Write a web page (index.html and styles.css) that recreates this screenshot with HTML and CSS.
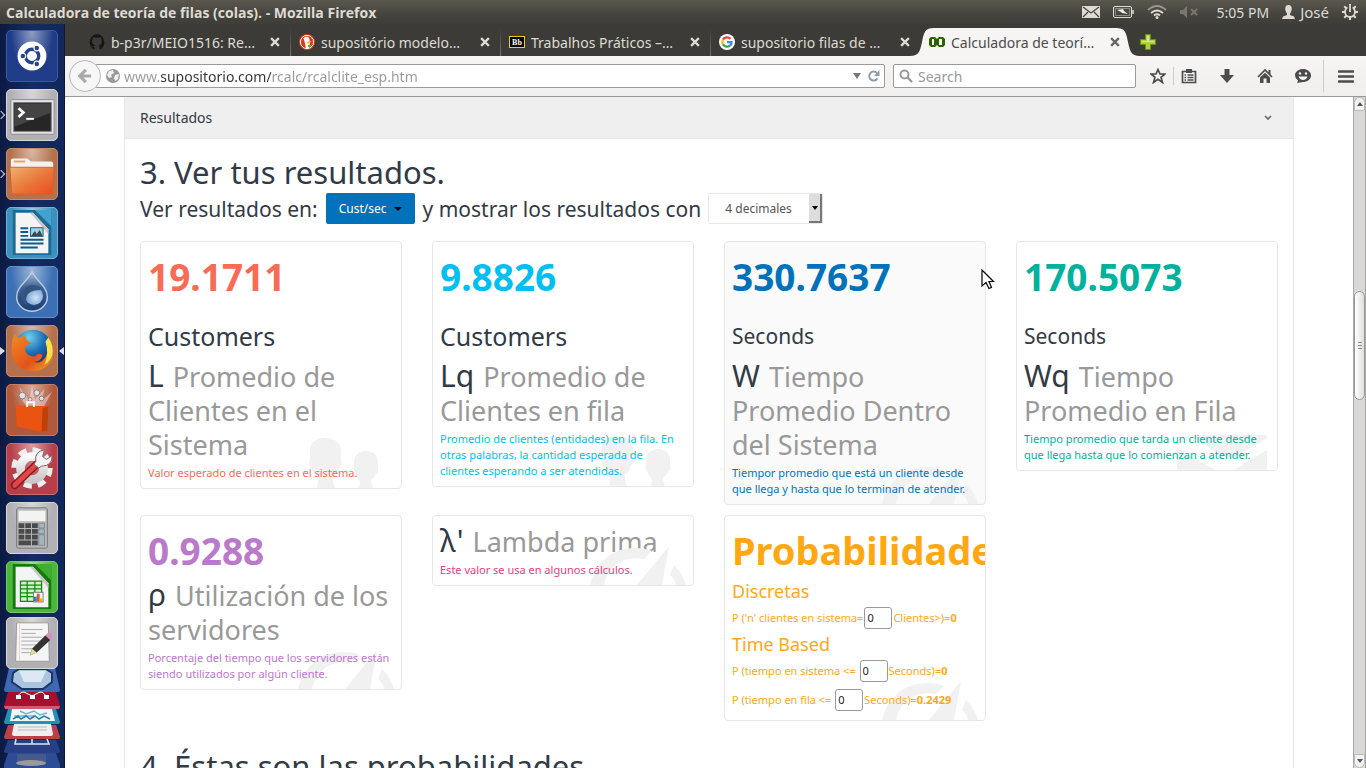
FILE: index.html
```html
<!DOCTYPE html>
<html lang="es">
<head>
<meta charset="utf-8">
<title>Calculadora de teoría de filas (colas).</title>
<link rel="stylesheet" href="styles.css">
</head>
<body>
<svg class="defs" aria-hidden="true">
  <defs>
    <linearGradient id="folder" x1="0" y1="0" x2="1" y2="1"><stop offset="0" stop-color="#f0b070"/><stop offset=".5" stop-color="#e97a3c"/><stop offset="1" stop-color="#ee4a1c"/></linearGradient>
    <linearGradient id="drop" x1="0" y1="0" x2="0" y2="1"><stop offset="0" stop-color="#a9bdd6"/><stop offset=".4" stop-color="#3f6396"/><stop offset="1" stop-color="#1d3c70"/></linearGradient>
    <radialGradient id="dropIn" cx=".6" cy=".6" r=".5"><stop offset="0" stop-color="#cfe3f5"/><stop offset="1" stop-color="#7fa9d8"/></radialGradient>
    <radialGradient id="globe" cx=".4" cy=".2" r=".9"><stop offset="0" stop-color="#6fd0ee"/><stop offset=".45" stop-color="#1b6db4"/><stop offset="1" stop-color="#0a2258"/></radialGradient>
    <linearGradient id="fox" x1="0" y1="0" x2="1" y2="1"><stop offset="0" stop-color="#f28a22"/><stop offset=".6" stop-color="#e4531a"/><stop offset="1" stop-color="#f9a51c"/></linearGradient>
    <linearGradient id="steel" x1="0" y1="0" x2="0" y2="1"><stop offset="0" stop-color="#fafafa"/><stop offset="1" stop-color="#c9c9c9"/></linearGradient>
    <symbol id="people" viewBox="0 0 70 50">
      <path d="M16 0C27 0 33 6 32 16V22C34 27 30 29 29 32C28 37 24 36 24 40V44L26 50H8L9 44V40C9 36 4 38 3 31C1 28 -1 27 1 22V14C0 6 6 0 16 0Z"/>
      <path d="M57 13C65 13 69 18 69 25V30C70 34 68 35 66 37C65 41 62 40 62 44L64 50H50L51 45C51 41 48 41 47 37C45 35 44 33 45 29V24C45 18 49 13 57 13Z"/>
    </symbol>
    <symbol id="gauge" viewBox="0 0 96 39">
      <path d="M79 0L72 39H47Z"/>
      <path d="M0 39C6 15 25 1 46 2Q55 2 62 5L54 13C34 9 18 20 14 39Z"/>
      <path d="M84 19Q93 28 96 39H86Q85 33 80 29Z"/>
    </symbol>
    <symbol id="mail" viewBox="0 0 90 35">
      <path d="M17 0H90V3L53 25L17 3ZM0 13L38 35H0ZM90 15V35H57Z"/>
    </symbol>
    <symbol id="close" viewBox="0 0 10 10"><path d="M2 2L8 8M8 2L2 8" stroke="currentColor" stroke-width="2.4" fill="none" stroke-linecap="square"/></symbol>
  </defs>
</svg>

<div class="desktop">
  <header class="topbar">
    <span class="window-title">Calculadora de teoría de filas (colas). - Mozilla Firefox</span>
    <div class="indicators">
      <svg width="18" height="12" viewBox="0 0 18 12"><rect width="18" height="12" fill="#dfdbd2"/><path d="M1 1L9 7L17 1M1 11L6 6M17 11L12 6" stroke="#4a4843" stroke-width="1.3" fill="none"/></svg>
      <svg width="21" height="12" viewBox="0 0 21 12"><rect x=".5" y=".5" width="18" height="11" rx="1.5" fill="none" stroke="#dfdbd2"/><rect x="2.5" y="2.5" width="14" height="7" fill="none" stroke="#8a8880"/><path d="M20 4V8" stroke="#dfdbd2" stroke-width="1.5"/><path d="M4 4L10 3L11 5L15 8L9 7L8 6Z" fill="#efece6"/></svg>
      <svg width="20" height="14" viewBox="0 0 20 14"><path d="M1 5Q10 -3 19 5" stroke="#98958d" stroke-width="1.7" fill="none"/><path d="M4 8Q10 3 16 8M7 10.500Q10 8 13 10.500" stroke="#dfdbd2" stroke-width="1.8" fill="none"/><circle cx="10" cy="12.500" r="1.500" fill="#dfdbd2"/></svg>
      <svg width="18" height="12" viewBox="0 0 18 12"><path d="M0 4H3L7 0V12L3 8H0Z" fill="#7a776f"/><path d="M11 3L17 9M17 3L11 9" stroke="#7a776f" stroke-width="2"/></svg>
      <span class="clock">5:05 PM</span>
      <span class="user"><svg width="13" height="14" viewBox="0 0 13 14"><path d="M6.500 0C9 0 10 2 9.700 4.500Q9.400 7 8 8.500V10L12 11.500L13 14H0L1 11.500L5 10V8.500Q3.600 7 3.300 4.500C3 2 4 0 6.500 0Z" fill="#dfdbd2"/></svg>José</span>
      <svg width="16" height="16" viewBox="0 0 16 16"><circle cx="8" cy="8" r="5" fill="none" stroke="#dfdbd2" stroke-width="1.800"/><path d="M8 0V3M8 13V16M0 8H3M13 8H16M2.300 2.300L4.500 4.500M11.500 11.500L13.700 13.700M2.300 13.700L4.500 11.500M11.500 4.500L13.700 2.300" stroke="#dfdbd2" stroke-width="2"/><path d="M8 1V8" stroke="#45433e" stroke-width="5"/><path d="M8 1V8" stroke="#dfdbd2" stroke-width="1.800"/></svg>
    </div>
  </header>

  <div class="workspace">
    <nav class="launcher" aria-label="Lanzador">
      <a class="tile tile-dash" href="#" aria-label="Dash"><svg viewBox="0 0 52 52"><circle cx="26" cy="26" r="15" fill="#fff"/><circle cx="26" cy="26" r="7" fill="none" stroke="#24458e" stroke-width="3.500"/><g fill="#24458e" stroke="#fff" stroke-width="1.200"><circle cx="16.500" cy="26" r="2.900"/><circle cx="31" cy="17.700" r="2.900"/><circle cx="31" cy="34.300" r="2.900"/></g></svg></a>
      <a class="tile tile-grey running" href="#" aria-label="Terminal"><svg viewBox="0 0 52 52"><rect x="4" y="10" width="45" height="36" rx="1" fill="#e4e4e4" stroke="#8a8a90"/><rect x="7" y="13" width="39" height="30" fill="#262626" stroke="#777"/><path d="M8 14H45V24L8 38Z" fill="#444"/><path d="M12 19L17 23.500L12 28" stroke="#fff" stroke-width="2.800" fill="none"/><path d="M20 30H28" stroke="#fff" stroke-width="2"/></svg></a>
      <a class="tile tile-brown running" href="#" aria-label="Archivos"><svg viewBox="0 0 52 52"><path d="M4 12Q4 10 6 10H21L25 13H46Q48 13 48 15V24H4Z" fill="#f3f1ef"/><rect x="7" y="12" width="12" height="2" fill="#f2a06b"/><path d="M3 19H49L47 47H5Z" fill="url(#folder)" stroke="#d9602c"/></svg></a>
      <a class="tile tile-cyan" href="#" aria-label="Writer"><svg viewBox="0 0 52 52"><path d="M6 2H46V49H6Z" fill="#1b6a94"/><path d="M29 2H46V19Z" fill="#3fa2cf"/><path d="M9 5H27L43 22V47H9Z" fill="#f4f4f4"/><path d="M27 5L43 22V27L24 5Z" fill="#c8c8c8"/><path d="M14 21H22M14 25H22M14 29H22M14 33H38M14 37H38M14 41H32" stroke="#0b5c8c" stroke-width="2"/><rect x="24.500" y="20.500" width="13" height="9" fill="#9fd2ee" stroke="#0b5c8c"/><path d="M25 29L29 24L31 27L34 23L37 29Z" fill="#444"/></svg></a>
      <a class="tile tile-blue" href="#" aria-label="Deluge"><svg viewBox="0 0 52 52"><path d="M26 5C30 14 42 20 42 31A16 15 0 0 1 10 31C10 20 22 14 26 5Z" fill="url(#drop)" stroke="#b9cce2" stroke-width="1.500"/><circle cx="28" cy="30" r="9.500" fill="url(#dropIn)"/><path d="M35 21Q20 14 15 29Q15 37 21 40Q16 24 35 24Z" fill="#35547e"/></svg></a>
      <a class="tile tile-brown running focused" href="#" aria-label="Firefox"><svg viewBox="0 0 52 52"><circle cx="27" cy="24" r="20" fill="url(#globe)"/><path d="M8 8Q10 12 13 12L19 10L20 15L26 18L20 20Q17 26 22 30Q28 34 32 29Q36 28 37 31Q34 38 27 37Q40 42 44 20L48 22Q50 35 40 43Q28 51 14 43Q3 35 5 20Q5 14 8 8Z" fill="url(#fox)"/><path d="M43 12Q49 20 47 31Q44 38 39 40Q44 28 40 16Z" fill="#fde04a"/></svg></a>
      <a class="tile tile-rust" href="#" aria-label="Software"><svg viewBox="0 0 52 52"><path d="M26 28L6 5L17 17L13 2L23 15L26 1L29 15L39 4L36 16L47 7L38 23Z" fill="#fff" opacity=".4"/><g fill="#dfe4ea" stroke="#8a7770"><circle cx="16" cy="11" r="3.500"/><circle cx="31" cy="8" r="3"/><circle cx="36" cy="14" r="2.500"/><circle cx="24" cy="15" r="2"/></g><path d="M9 21L43 22L42 47L36 49L10 43Z" fill="#ea5310"/><path d="M36 49L37 24L43 22L42 47Z" fill="#bf400b"/><path d="M21 23V18H28V23" stroke="#fff" stroke-width="2" fill="none"/></svg></a>
      <a class="tile tile-red" href="#" aria-label="Configuración"><svg viewBox="0 0 52 52"><circle cx="26" cy="25" r="18" fill="none" stroke="#eee" stroke-width="7" stroke-dasharray="8.100 6.040"/><circle cx="26" cy="25" r="12" fill="none" stroke="url(#steel)" stroke-width="9"/><path d="M8 43L33 19" stroke="#8f1717" stroke-width="8" stroke-linecap="round"/><path d="M8 43L32 20" stroke="#e04848" stroke-width="5" stroke-linecap="round"/><path d="M30 18Q28 8 39 6L37 13L41 16L47 12Q47 23 36 23L33 25L28 21Z" fill="#f2f2f2" stroke="#7d6060"/></svg></a>
      <a class="tile tile-grey" href="#" aria-label="Calculadora"><svg viewBox="0 0 52 52"><rect x="10" y="5" width="32" height="42" rx="2" fill="#b7b7b7" stroke="#777"/><rect x="12" y="8" width="28" height="11" fill="#f3f3f1"/><g fill="#4a4a4a"><path d="M12 21h6v5h-6zM19 21h6v5h-6zM26 21h6v5h-6zM12 27h6v5h-6zM19 27h6v5h-6zM26 27h6v5h-6zM12 33h6v5h-6zM19 33h6v5h-6zM26 33h6v5h-6zM12 39h13v5h-13zM26 39h6v5h-6z"/></g><path d="M33 21h6v5h-6zM33 27h6v5h-6zM33 33h6v11h-6z" fill="#a5b5bf" stroke="#6c7880" stroke-width=".7"/></svg></a>
      <a class="tile tile-green" href="#" aria-label="Calc"><svg viewBox="0 0 52 52"><path d="M6 2H46V49H6Z" fill="#157a0c"/><path d="M29 2H46V19Z" fill="#3fae30"/><path d="M9 5H27L43 22V47H9Z" fill="#f4f4f4"/><path d="M27 5L43 22V27L24 5Z" fill="#c8c8c8"/><path d="M14 20H36V41H14ZM14 24H36M14 28H36M14 32H36M14 36H36M21 20V41M29 20V41" fill="#d2f0ca" stroke="#128a0b" stroke-width="1.300"/><rect x="27.500" y="31.500" width="10" height="10" fill="#fff" stroke="#777"/><path d="M28 36h3v5h-3z" fill="#2a80c8"/><path d="M31 33h3v8h-3z" fill="#e05a18"/><path d="M34 38h3v3h-3z" fill="#f0b000"/></svg></a>
      <a class="tile tile-grey tile-tilt" href="#" aria-label="Editor de texto"><svg viewBox="0 0 52 52"><path d="M10 5H43L44 45H9Z" fill="#f5f5f5" stroke="#999"/><path d="M15 12H37M15 16H30M15 20H36M15 24H34M15 28H32M15 32H30M15 36H26" stroke="#aaa"/><path d="M13 6V45" stroke="#ecc"/><path d="M24 39L26 32L40 18L45 23L31 36Z" fill="#333"/><path d="M24 39L26 32L31 36Z" fill="#e8dc98"/><path d="M40 18L43 15Q47 15 47 20L45 23Z" fill="#d68fc0"/></svg></a>
      <div class="stack" role="img" aria-label="Aplicaciones plegadas"><svg viewBox="0 0 56 100">
        <path d="M5 0H51L56 22Q56 24 54 24H2Q0 24 0 22Z" fill="#3f68b2"/><path d="M9 5L15 1H42L48 5V14L39 21H18L8 14Z" fill="#a9c5e2" stroke="#1d3566" stroke-width="2"/><path d="M15 3H42L37 14H20Z" fill="#dce9f5"/>
        <path d="M4 24H52L56 38Q56 41 53 41H3Q0 41 0 38Z" fill="#a80f2e"/><path d="M0 38L56 38L55 41H1Z" fill="#d05a70"/><path d="M14 28Q18 22 22 25L28 28L34 25Q38 22 42 28" stroke="#fff" fill="none"/><path d="M12 27h5v4h-5zM26 27h5v4h-5zM40 27h5v4h-5z" fill="#fff"/>
        <path d="M4 41H52L56 54Q56 56 53 56H3Q0 56 0 54Z" fill="#2391b4"/><path d="M8 41H48L51 53H6Z" fill="#f1f5f7"/><path d="M16 43L22 46L30 43L36 47L43 45M10 48H30" stroke="#64bcd6" stroke-width="1.500" fill="none"/><path d="M9 51L14 48L17 51L22 48L26 51L31 48L35 51L40 48L46 51" stroke="#257f9f" stroke-width="1.500" fill="none"/>
        <path d="M4 57H52L56 69Q56 71 53 71H3Q0 71 0 69Z" fill="#bd4046"/><path d="M10 56H47L49 66Q49 68 47 68H10Q8 68 8 66Z" fill="#eee"/><path d="M14 59H43M14 62H43" stroke="#bbb"/>
        <path d="M4 72H52L56 83Q56 85 53 85H3Q0 85 0 83Z" fill="#263f87"/><path d="M12 71L11 76H45L43 71M28 71V76" fill="none" stroke="#dfe3ea" stroke-width="1.500"/>
        <path d="M4 85H52L56 97V100H0V97Z" fill="#2d4c96"/><path d="M13 86H42V96Q28 100 13 96Z" fill="#465a87"/><ellipse cx="27" cy="95" rx="15" ry="3" fill="#9a9a9a"/>
      </svg></div>
    </nav>

    <div class="browser">
      <div class="tabstrip" role="tablist">
        <div class="tab" role="tab">
          <svg class="fav" viewBox="0 0 16 16"><path d="M8 .3A8 8 0 0 0 5.500 15.600V13Q3 13.500 2.500 11.600Q4 13 5.600 12Q5.700 11.300 6.100 11Q3 10.500 3 7.200Q3 6 3.800 5Q3.500 4 3.900 3Q5 3 6 3.800Q8 3.300 10 3.800Q11 3 12.100 3Q12.500 4 12.200 5Q13 6 13 7.200Q13 10.500 9.900 11Q10.500 11.500 10.500 12.500V15.600A8 8 0 0 0 8 .3Z" fill="#171515"/></svg>
          <span class="tab-title">b-p3r/MEIO1516: Re…</span><button class="tab-close" aria-label="Cerrar"><svg viewBox="0 0 10 10"><use href="#close"/></svg></button></div>
        <div class="tab" role="tab">
          <svg class="fav" viewBox="0 0 16 16"><circle cx="8" cy="8" r="8" fill="#de3818"/><circle cx="8" cy="8" r="6.600" fill="#de3818" stroke="#fff"/><path d="M4.500 4Q9 1 10.500 5L11 9L10 14H7Q6 9 4.500 4Z" fill="#fff"/><path d="M8 8L12 7L11 9L8 9.500Z" fill="#fdb813"/><path d="M9 11H12V13H9Z" fill="#4cb244"/></svg>
          <span class="tab-title">supositório modelo…</span><button class="tab-close" aria-label="Cerrar"><svg viewBox="0 0 10 10"><use href="#close"/></svg></button></div>
        <div class="tab" role="tab">
          <svg class="fav" viewBox="0 0 16 16"><rect x=".5" y="2.500" width="15" height="11" fill="#000" stroke="#f5c531"/><text x="8" y="11" class="fav-text">Bb</text></svg>
          <span class="tab-title">Trabalhos Práticos –…</span><button class="tab-close" aria-label="Cerrar"><svg viewBox="0 0 10 10"><use href="#close"/></svg></button></div>
        <div class="tab" role="tab">
          <svg class="fav" viewBox="0 0 16 16"><circle cx="8" cy="8" r="8" fill="#fff"/><g fill="none" stroke-width="2.200"><path d="M11.500 4.800A4.700 4.700 0 0 0 4 5.600" stroke="#ea4335"/><path d="M4 5.600A4.700 4.700 0 0 0 4 10.400" stroke="#fbbc05"/><path d="M4 10.400A4.700 4.700 0 0 0 11 11.600" stroke="#34a853"/><path d="M11 11.600Q12.700 10.200 12.600 8.200H8" stroke="#4285f4"/></g></svg>
          <span class="tab-title">supositorio filas de …</span><button class="tab-close" aria-label="Cerrar"><svg viewBox="0 0 10 10"><use href="#close"/></svg></button></div>
        <div class="tab tab-active" role="tab" aria-selected="true">
          <svg class="tab-shape" viewBox="0 0 230 28" preserveAspectRatio="none"><path d="M0 28C9 28 10 23 12 14C14 4 15 0 24 0H206C215 0 216 4 218 14C220 23 221 28 230 28Z" fill="#f6f5f4"/></svg>
          <svg class="fav" viewBox="0 0 16 16"><path d="M2 3H6L8 5L10 3H14L16 5V11L14 13H10L8 11L6 13H2L0 11V5Z" fill="#2a6200"/><rect x="3" y="5" width="2" height="6" fill="#fff"/><rect x="10" y="5" width="3" height="6" fill="#fff"/></svg>
          <span class="tab-title">Calculadora de teorí…</span><button class="tab-close" aria-label="Cerrar"><svg viewBox="0 0 10 10"><use href="#close"/></svg></button></div>
        <button class="new-tab" aria-label="Nueva pestaña"><svg width="16" height="16" viewBox="0 0 16 16"><path d="M5.500 .5H10.500V5.500H15.500V10.500H10.500V15.500H5.500V10.500H.5V5.500H5.500Z" fill="#aed044" stroke="#688d18"/><path d="M7 2H9V7H14V8H2V7H7Z" fill="#d5e88a"/></svg></button>
      </div>

      <div class="toolbar">
        <button class="back" aria-label="Atrás"><svg width="14" height="14" viewBox="0 0 16 16"><path d="M9 1L2 8L9 15M2 8H15" fill="none" stroke="#a9a9a9" stroke-width="3.600"/></svg></button>
        <div class="urlbar">
          <svg width="14" height="14" viewBox="0 0 14 14"><circle cx="7" cy="7" r="7" fill="#999"/><path d="M3 2L7 1L8 4L5 6L6 8L3 9L1 6ZM9 6L13 5L12 10L9 12L8 9Z" fill="#f1f1f1"/></svg>
          <input class="url" type="text" aria-label="Dirección" value="www.supositorio.com/rcalc/rcalclite_esp.htm">
          <svg width="8" height="6" viewBox="0 0 8 6"><path d="M0 0H8L4 6Z" fill="#777"/></svg>
          <svg width="12" height="12" viewBox="0 0 12 12"><path d="M9.500 8.500A4.500 4.500 0 1 1 9 3" fill="none" stroke="#8d9aa7" stroke-width="2"/><path d="M11.500 0V6H6Z" fill="#8d9aa7"/></svg>
        </div>
        <div class="searchbar">
          <svg width="14" height="14" viewBox="0 0 14 14"><circle cx="5.500" cy="5.500" r="4" fill="none" stroke="#999" stroke-width="2"/><path d="M8.500 8.500L13 13" stroke="#999" stroke-width="2.400"/></svg>
          <input type="text" aria-label="Search" placeholder="Search">
        </div>
        <div class="tools">
          <button aria-label="Marcar"><svg width="16" height="16" viewBox="0 0 16 16"><path d="M8 1.500L10 6H15L11 9.300L12.500 14.500L8 11.400L3.500 14.500L5 9.300L1 6H6Z" fill="none" stroke="#4c4c4c" stroke-width="1.700"/></svg></button>
          <span class="rule"></span>
          <button aria-label="Marcadores"><svg width="16" height="16" viewBox="0 0 16 16"><path d="M1.500 3.500H14.500V14.500H1.500Z" fill="#f5f5f5" stroke="#4c4c4c" stroke-width="1.700"/><path d="M5 1H11V5H5Z" fill="#4c4c4c"/><path d="M3.500 7H5M3.500 9.500H5M3.500 12H5M6.500 7H12.500M6.500 9.500H12.500M6.500 12H12.500" stroke="#4c4c4c" stroke-width="1.300"/></svg></button>
          <button aria-label="Descargas"><svg width="16" height="16" viewBox="0 0 16 16"><path d="M5.500 1H10.500V7H15L8 15L1 7H5.500Z" fill="#4c4c4c"/></svg></button>
          <button aria-label="Inicio"><svg width="16" height="16" viewBox="0 0 16 16"><path d="M1 9L8 2L15 9" fill="none" stroke="#4c4c4c" stroke-width="1.700"/><path d="M11.500 2H13.500V6H11.500ZM3 9.500L8 4.800L13 9.500V15H9.500V10.500H6.500V15H3Z" fill="#4c4c4c"/></svg></button>
          <button aria-label="Chat"><svg width="16" height="16" viewBox="0 0 16 16"><path d="M8 1C12 1 16 3.500 16 7.500S12 14 8 14L2 15L3 12.500Q0 10.500 0 7.500C0 3.500 4 1 8 1Z" fill="#4c4c4c"/><circle cx="5" cy="5.500" r="1.200" fill="#f5f5f5"/><circle cx="11" cy="5.500" r="1.200" fill="#f5f5f5"/><path d="M3.500 8.500H12.500Q11 12 8 12T3.500 8.500Z" fill="#f5f5f5"/></svg></button>
          <span class="rule rule-tall"></span>
          <button aria-label="Menú"><svg width="16" height="13" viewBox="0 0 16 13"><path d="M1 1.500H15M1 6.500H15M1 11.500H15" stroke="#4c4c4c" stroke-width="2.600" stroke-linecap="round"/></svg></button>
        </div>
      </div>

      <div class="viewport">
        <main class="page">
          <section class="panel">
            <div class="panel-head"><span>Resultados</span><svg width="8" height="5" viewBox="0 0 8 5"><path d="M1 1L4 4L7 1" fill="none" stroke="#667" stroke-width="1.700"/></svg></div>
            <div class="panel-body">
              <h1 class="step">3. Ver tus resultados.</h1>
              <div class="options">
                <span>Ver resultados en:</span>
                <button class="unit-button">Cust/sec<i class="caret"></i></button>
                <label for="decimals">y mostrar los resultados con</label>
                <span class="select-box"><select id="decimals"><option>4 decimales</option></select><i class="select-arrow"></i></span>
              </div>

              <div class="cards">
                <article class="card coral">
                  <strong class="value">19.1711</strong><span class="unit unit-large">Customers</span>
                  <h2 class="name"><span class="symbol">L</span> Promedio de Clientes en el Sistema</h2>
                  <svg class="mark mark-people"><use href="#people"/></svg>
                  <p class="note">Valor esperado de clientes en el sistema.</p>
                </article>
                <article class="card sky">
                  <strong class="value">9.8826</strong><span class="unit unit-large">Customers</span>
                  <h2 class="name"><span class="symbol">Lq</span> Promedio de Clientes en fila</h2>
                  <svg class="mark mark-people"><use href="#people"/></svg>
                  <p class="note">Promedio de clientes (entidades) en la fila. En otras palabras, la cantidad esperada de clientes esperando a ser atendidas.</p>
                </article>
                <article class="card blue hovered">
                  <strong class="value">330.7637</strong><span class="unit">Seconds</span>
                  <h2 class="name"><span class="symbol">W</span> Tiempo Promedio Dentro del Sistema</h2>
                  <svg class="mark mark-gauge"><use href="#gauge"/></svg>
                  <p class="note">Tiempor promedio que está un cliente desde que llega y hasta que lo terminan de atender.</p>
                </article>
                <article class="card teal">
                  <strong class="value">170.5073</strong><span class="unit">Seconds</span>
                  <h2 class="name"><span class="symbol">Wq</span> Tiempo Promedio en Fila</h2>
                  <svg class="mark mark-mail"><use href="#mail"/></svg>
                  <p class="note">Tiempo promedio que tarda un cliente desde que llega hasta que lo comienzan a atender.</p>
                </article>
                <article class="card purple">
                  <strong class="value">0.9288</strong>
                  <h2 class="name"><span class="symbol">ρ</span> Utilización de los servidores</h2>
                  <svg class="mark mark-gauge"><use href="#gauge"/></svg>
                  <p class="note">Porcentaje del tiempo que los servidores están siendo utilizados por algún cliente.</p>
                </article>
                <article class="card pink">
                  <h2 class="name"><span class="symbol">λ'</span> Lambda prima</h2>
                  <svg class="mark mark-gauge"><use href="#gauge"/></svg>
                  <p class="note">Este valor se usa en algunos cálculos.</p>
                </article>
                <article class="card orange">
                  <strong class="value">Probabilidades</strong>
                  <svg class="mark mark-gauge"><use href="#gauge"/></svg>
                  <h3 class="group">Discretas</h3>
                  <p class="prob"><label for="n">P ('n' clientes en sistema=</label><input id="n" type="text" value="0">Clientes&gt;)=<b>0</b></p>
                  <h3 class="group">Time Based</h3>
                  <p class="prob"><label for="ts">P (tiempo en sistema &lt;=&nbsp;</label><input id="ts" type="text" value="0">Seconds)=<b>0</b></p>
                  <p class="prob"><label for="tf">P (tiempo en fila &lt;=&nbsp;</label><input id="tf" type="text" value="0">Seconds)=<b>0.2429</b></p>
                </article>
              </div>
              <h1 class="step">4. Éstas son las probabilidades</h1>
            </div>
          </section>
        </main>
        <div class="scrollbar" aria-hidden="true"><span class="scroll-up"></span><span class="scroll-space"></span><span class="thumb"></span><span class="scroll-space scroll-rest"></span><span class="scroll-up scroll-down"></span></div>
      </div>
    </div>
  </div>
</div>
<svg class="pointer" width="14" height="21" viewBox="0 0 14 21" aria-hidden="true"><path d="M1 1V17L5 13.500L8 19.500L10.500 18.500L8 12.500H12.500Z" fill="#fff" stroke="#000" stroke-width="1.200"/></svg>
</body>
</html>
```

FILE: styles.css
```css
* { box-sizing: border-box; }
body {
  margin: 0;
  font-family: "Noto Sans", "Open Sans", sans-serif;
  font-size: 14px;
  color: #323a47;
  overflow: hidden;
}
button, input, select { font: inherit; margin: 0; }
button { border: 0; padding: 0; background: none; }
h1, h2, h3, p { margin: 0; font-weight: 400; }
svg { flex: none; display: block; }
.defs { position: absolute; width: 0; height: 0; }

.desktop { display: flex; flex-direction: column; height: 100vh; }
.workspace { display: flex; flex: 1; min-height: 0; }

/* Top bar */
.topbar {
  display: flex;
  align-items: center;
  justify-content: space-between;
  flex: none;
  height: 24px;
  padding: 0 8px 0 6px;
  background: linear-gradient(#5a574e, #45443e 60%, #3e3d39);
  color: #dfdbd2;
}
.window-title { font: 700 14px "Open Sans", sans-serif; }
.indicators { display: flex; align-items: center; gap: 13px; }
.clock { margin-left: 6px; }
.user { display: flex; align-items: center; gap: 5px; font-size: 15px; }

/* Launcher */
.launcher {
  flex: none;
  width: 65px;
  padding: 6px 5px 0 6px;
  display: flex;
  flex-direction: column;
  gap: 7px;
  overflow: hidden;
  background: linear-gradient(90deg, #0c1a42, #132c63 50%, #12275a);
  border-right: 1px solid #0b1637;
}
.tile { position: relative; flex: none; width: 52px; height: 52px; border-radius: 5px; border: 1px solid rgba(255, 255, 255, .35); }
.tile::before { content: ""; position: absolute; inset: 0; border-radius: 4px; background: radial-gradient(ellipse at 50% 0, rgba(255, 255, 255, .5), transparent 60%); }
.tile svg { position: relative; width: 50px; height: 50px; }
.tile-dash { background: #1f3c88; border-color: #3d5aa0; }
.tile-grey { background: #b0b0b5; border-color: #d6d6da; }
.tile-brown { background: #b5714d; border-color: #c98a68; }
.tile-cyan { background: #3d90bb; border-color: #6cb4d6; }
.tile-blue { background: #3c6fb4; border-color: #6690cb; }
.tile-rust { background: #b1593c; border-color: #c77b60; }
.tile-red { background: #b63f4a; border-color: #cc6a72; }
.tile-green { background: #4cb53c; border-color: #77cc68; }
.tile-tilt { margin-top: -3px; }
.running::after {
  content: "";
  position: absolute;
  left: -9px;
  top: 22px;
  width: 5px;
  height: 5px;
  border: solid #d0d0d0;
  border-width: 1px 1px 0 0;
  transform: rotate(45deg);
}
.focused::after {
  left: -7px;
  top: 21px;
  width: 64px;
  height: 8px;
  border: 0;
  transform: none;
  background: #ddd;
  clip-path: polygon(0 0, 5px 4px, 0 8px, 0 0, 64px 0, 59px 4px, 64px 8px, 64px 0);
}
.stack { margin: -8px -3px 0 -2px; flex: none; }
.stack svg { width: 56px; height: 100px; }

/* Browser chrome */
.browser { flex: 1; min-width: 0; display: flex; flex-direction: column; }
.tabstrip {
  display: flex;
  flex: none;
  height: 32px;
  padding: 4px 0 0 15px;
  background: #3c3b37;
}
.tab { position: relative; display: flex; align-items: center; flex: 0 1 210px; min-width: 0; padding: 0 10px 0 9px; color: #dfdbd2; }
.tab + .tab:not(.tab-active)::before {
  content: "";
  position: absolute;
  left: 0;
  top: 0;
  bottom: 0;
  width: 1px;
  background: linear-gradient(#3c3b37, #77756d);
}
.fav { position: relative; width: 16px; height: 16px; margin-right: 6px; }
.fav-text { font: 700 8px "Liberation Serif", serif; fill: #fff; text-anchor: middle; }
.tab-title { position: relative; flex: 1; white-space: nowrap; }
.tab-close { position: relative; width: 10px; color: #dfdbd2; }
.tab-active { color: #4c4c4c; }
.tab-active .tab-close { color: #666; }
.tab-shape { position: absolute; left: -10px; top: 0; width: calc(100% + 20px); height: 28px; }
.new-tab { margin-left: 10px; }

.toolbar {
  display: flex;
  align-items: center;
  flex: none;
  height: 41px;
  padding-left: 4px;
  background: linear-gradient(#f6f5f4, #f0efee);
  border-bottom: 1px solid #999;
}
.back { position: relative; display: grid; place-items: center; width: 32px; height: 32px; border: 1px solid #b4b9be; border-radius: 50%; background: #f7f7f7; flex: none; }
.urlbar, .searchbar { display: flex; align-items: center; height: 24px; border: 1px solid #999; border-radius: 2px; background: #fff; }
.urlbar { flex: 1; margin-left: -6px; padding: 0 4px 0 10px; gap: 4px; }
.urlbar svg:last-child { margin-left: 3px; }
.searchbar { flex: 0 1 243px; margin-left: 8px; padding: 0 5px; gap: 5px; }
.urlbar input, .searchbar input { flex: 1; min-width: 0; border: 0; padding: 0; outline: 0; background: none; color: #999; }
.urlbar .url {
  background: linear-gradient(90deg, #999 36px, #333 36px, #333 147px, #999 147px);
  -webkit-background-clip: text;
  background-clip: text;
  -webkit-text-fill-color: transparent;
}
.searchbar input::placeholder { color: #999; opacity: 1; }
.tools { display: flex; align-items: center; gap: 22px; padding: 0 12px 0 14px; }
.rule { width: 1px; height: 18px; background: #ccc; margin: 0 -15px; }
.rule-tall { height: 32px; margin: 0 -10px; }
.tools button:last-child { margin-left: 2px; }

/* Page */
.viewport { display: flex; flex: 1; min-height: 0; background: #fff; }
.page { flex: 1; min-width: 0; overflow: hidden; }
.panel { max-width: 1170px; margin: 0 auto; border: solid #e7e7e7; border-width: 0 1px; }
.panel-head {
  display: flex;
  align-items: center;
  justify-content: space-between;
  height: 42px;
  padding: 0 21px 0 15px;
  background: #efefef;
  border-bottom: 1px solid #e7e7e7;
  border-radius: 3px 3px 0 0;
}
.panel-body { padding: 12px 15px; }
.step { font-size: 31px; line-height: 42px; }
.options { display: flex; align-items: center; height: 31px; margin-bottom: 17px; font-size: 21px; white-space: nowrap; }
.unit-button { display: flex; align-items: center; gap: 7px; height: 31px; margin: 0 8px; padding: 0 13px; border-radius: 2px; background: #0072bc; color: #fff; font-size: 12px; }
.caret { border: solid transparent; border-width: 4px 4px 0; border-top-color: #000; }
.select-box { display: flex; height: 31px; margin-left: 7px; border: 1px solid #e7e7e7; border-radius: 2px; }
.select-box select { appearance: none; width: 100px; border: 0; padding: 0 0 0 16px; background: none; color: #555; font-size: 12px; }
.select-arrow { display: grid; place-items: center; width: 13px; background: #ddd; border: solid #777; border-width: 0 2px 2px 0; }
.select-arrow::before { content: ""; border: solid transparent; border-width: 4px 3px 0; border-top-color: #000; }

.cards { display: grid; grid-template-columns: repeat(4, minmax(0, 1fr)); gap: 10px 30px; align-items: start; margin-bottom: 24px; }
.card { position: relative; overflow: hidden; padding: 7px; border: 1px solid #e7e7e7; border-radius: 4px; background: #fff; }
.hovered { background: #fafafa; }
.value { display: block; font-size: 37px; line-height: 55px; }
.orange .value { font-size: 38px; }
.unit { display: block; font-size: 21px; line-height: 36px; padding: 14px 0 5px; }
.unit-large { font-size: 25px; }
.name { margin-bottom: 3px; font-size: 27px; line-height: 34px; color: #999; }
.symbol { font-size: 30px; color: #323a47; margin-right: 2px; }
.pink .name { margin-top: 1px; }
.note { position: relative; padding-right: 4px; font-size: 11px; line-height: 16px; }
.mark { position: absolute; bottom: 0; fill: #f1f1f1; }
.mark-people { right: 22px; width: 70px; height: 50px; }
.mark-gauge { right: 7px; width: 96px; height: 39px; }
.mark-mail { right: 10px; width: 90px; height: 35px; }
.coral { --accent: #f86c55; }
.sky { --accent: #00bff3; }
.blue { --accent: #0072bc; }
.teal { --accent: #00b29e; }
.purple { --accent: #ba79cb; }
.pink { --accent: #ec3b83; }
.orange { --accent: #ffa812; }
.value, .note, .group, .prob { color: var(--accent); }
.group { position: relative; font-size: 18px; line-height: 26px; }
.prob { position: relative; display: flex; align-items: center; height: 27px; font-size: 11px; white-space: nowrap; }
.prob + .prob { margin-top: 2px; }
.prob input { width: 28px; height: 22px; margin: 0 1px; padding: 0 2px; border: 1px solid #999; border-radius: 3px; background: #fff; color: #222; }

/* Scrollbar */
.scrollbar { display: flex; flex-direction: column; flex: none; width: 13px; background: #d9d8d6; border: solid #a9a7a3; border-width: 0 1px; }
.scroll-up { display: grid; place-items: center; height: 14px; border: 1px solid #bbb; border-radius: 6px 6px 0 0; background: #f2f2f2; }
.scroll-up::before { content: ""; border: solid transparent; border-width: 0 3px 4px; border-bottom-color: #555; }
.scroll-down { transform: scaleY(-1); }
.scroll-space { flex: 180; }
.scroll-rest { flex: 354; }
.thumb { flex: 0 0 109px; border: 1px solid #999; border-radius: 6px; background: repeating-linear-gradient(#888 0 1px, transparent 1px 3px) center / 4px 7px no-repeat, linear-gradient(90deg, #fff, #dededc); }

.pointer { position: absolute; left: 981px; top: 269px; }
```
